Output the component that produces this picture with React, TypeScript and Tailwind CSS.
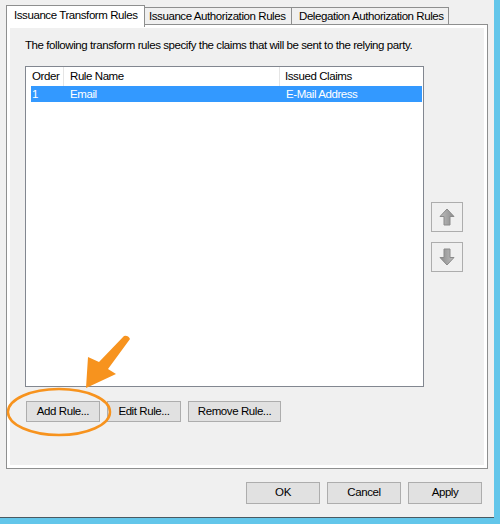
import React from "react";

function ArrowIcon({ down }: { down?: boolean }) {
  const id = down ? "gd" : "gu";
  return (
    <svg width="16" height="18" viewBox="0 0 16 18" className={down ? "rotate-180" : ""}>
      <defs>
        <linearGradient id={id} x1="0" y1="0" x2="1" y2="0">
          <stop offset="0" stopColor="#bdbdbd" />
          <stop offset="1" stopColor="#8c8c8c" />
        </linearGradient>
      </defs>
      <path
        d="M8 1 L15 8.5 L11 8.5 L11 17 L5 17 L5 8.5 L1 8.5 Z"
        fill={`url(#${id})`}
        stroke="#8a8a8a"
        strokeWidth="1"
        strokeLinejoin="round"
      />
    </svg>
  );
}

function Btn({ w, h, children }: { w: string; h: string; children: React.ReactNode }) {
  return (
    <div className={`${w} ${h} border border-[#adadad] bg-[#e1e1e1] flex items-center justify-center text-black`}>
      {children}
    </div>
  );
}

export default function App() {
  return (
    <div className="w-[500px] h-[524px] flex bg-[#f0f0f0] relative overflow-hidden text-black font-['Liberation_Sans',Arial,sans-serif] text-[11.5px] tracking-[-0.42px] whitespace-nowrap">
      <div className="w-[494px] flex flex-col">
        <div className="h-[517px] flex flex-col pl-[6px] pt-[5px]">
          {/* Tabs */}
          <div className="flex items-start h-[22px] -mb-[3px] relative z-10">
            <div className="w-[139px] h-[22px] border border-b-0 border-[#8e8f8f] bg-white pl-[7px] pt-[2px] leading-[14px]">
              Issuance Transform Rules
            </div>
            <div className="mt-[2px] w-[147px] h-[18px] border border-l-0 border-[#8e8f8f] bg-[#f0f0f0] pl-[4px] pt-[1px] leading-[14px]">
              Issuance Authorization Rules
            </div>
            <div className="mt-[2px] w-[157px] h-[18px] border border-l-0 border-[#8e8f8f] bg-[#f0f0f0] pl-[7px] pt-[1px] leading-[14px]">
              Delegation Authorization Rules
            </div>
          </div>
          {/* Panel */}
          <div className="w-[482px] h-[445px] border border-[#8e8f8f] bg-white p-[3px] flex">
            <div className="flex-1 bg-[#f0f0f0] flex flex-col pl-[15px]">
              <div className="h-[38px] pt-[9px] leading-[16px]">
                The following transform rules specify the claims that will be sent to the relying party.
              </div>
              <div className="flex items-start">
                <div className="w-[399px] h-[321px] border border-[#828790] bg-white flex flex-col">
                  <div className="flex h-[19px] leading-[18px] bg-white">
                    <div className="w-[38px] border-r border-[#e5e5e5] pl-[6px]">Order</div>
                    <div className="w-[216px] border-r border-[#e5e5e5] pl-[6px]">Rule Name</div>
                    <div className="w-[142px] pl-[5px]">Issued Claims</div>
                  </div>
                  <div className="flex h-[16px] ml-[5px] w-[391px] bg-[#3399ff] text-white leading-[16px]">
                    <div className="w-[34px] pl-[1px]">1</div>
                    <div className="w-[216px] pl-[5px]">Email</div>
                    <div className="flex-1 pl-[5px]">E-Mail Address</div>
                  </div>
                </div>
                <div className="ml-[7px] mt-[136px] flex flex-col gap-[10px]">
                  <div className="w-[32px] h-[30px] border border-[#adadad] bg-[#f0f0f0] flex items-center justify-center">
                    <ArrowIcon />
                  </div>
                  <div className="w-[32px] h-[30px] border border-[#adadad] bg-[#f0f0f0] flex items-center justify-center">
                    <ArrowIcon down />
                  </div>
                </div>
              </div>
              <div className="flex gap-[7px] mt-[14px] ml-[1px]">
                <Btn w="w-[74px]" h="h-[21px]">Add Rule...</Btn>
                <Btn w="w-[74px]" h="h-[21px]">Edit Rule...</Btn>
                <Btn w="w-[93px]" h="h-[21px]">Remove Rule...</Btn>
              </div>
            </div>
          </div>
          {/* Dialog buttons */}
          <div className="flex gap-[7px] mt-[13px] ml-[240px]">
            <Btn w="w-[74px]" h="h-[22px]">OK</Btn>
            <Btn w="w-[74px]" h="h-[22px]">Cancel</Btn>
            <Btn w="w-[74px]" h="h-[22px]">Apply</Btn>
          </div>
        </div>
        <div className="h-[1px] bg-[#4a5a62]" />
        <div className="flex-1 bg-[#63c6ea]" />
      </div>
      <div className="w-[6px] bg-[#63c6ea]" />
      {/* Annotation overlay */}
      <svg className="absolute left-0 top-0 pointer-events-none" width="500" height="524">
        <ellipse cx="59" cy="412" rx="51" ry="23" fill="none" stroke="#f7931e" strokeWidth="2.5" />
        <path d="M86 388 L88 357 L99 362 L124 336 Q128 335 130 339 L108 369 L116 374 Z" fill="#f7931e" />
      </svg>
    </div>
  );
}
